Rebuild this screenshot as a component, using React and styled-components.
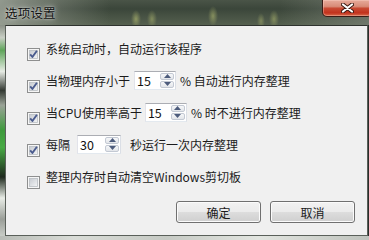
import React from "react";
import styled, { createGlobalStyle } from "styled-components";

const GlobalStyle = createGlobalStyle`
  html, body {
    margin: 0;
    padding: 0;
    width: 369px;
    height: 240px;
    overflow: hidden;
    background: #4f5a4c;
  }
  * { box-sizing: border-box; }
`;

const Window = styled.div`
  width: 369px;
  height: 240px;
  display: flex;
  flex-direction: column;
  overflow: hidden;
  font-family: "Noto Sans CJK SC", "Microsoft YaHei", sans-serif;
  background: #566052;
`;

const TitleBar = styled.div`
  height: 25px;
  flex: none;
  display: flex;
  align-items: center;
  padding-left: 5px;
  background:
    radial-gradient(ellipse 5px 9px at 136px 19px, rgba(196, 204, 120, 0.55), transparent),
    radial-gradient(ellipse 5px 9px at 152px 19px, rgba(196, 204, 120, 0.45), transparent),
    radial-gradient(ellipse 5px 10px at 213px 16px, rgba(196, 204, 120, 0.5), transparent),
    radial-gradient(ellipse 4px 8px at 261px 21px, rgba(196, 204, 120, 0.4), transparent),
    radial-gradient(ellipse 5px 9px at 274px 19px, rgba(196, 204, 120, 0.45), transparent),
    linear-gradient(to right, rgba(170, 176, 166, 0.75) 0, rgba(150, 156, 146, 0.35) 60px, transparent 110px, transparent 280px, rgba(140, 146, 136, 0.5) 369px),
    linear-gradient(to bottom, #4a5447 0%, #3b463a 35%, #55604f 100%);
`;

const Title = styled.span`
  font-size: 12.5px;
  color: #111;
  text-shadow: 0 0 6px rgba(255, 255, 255, 0.7), 0 0 2px rgba(255, 255, 255, 0.6);
  letter-spacing: 0.2px;
`;

const CloseButton = styled.div`
  margin-left: auto;
  margin-right: -3px;
  align-self: flex-start;
  width: 50px;
  height: 17px;
  border: 1px solid #3a1c16;
  border-top: none;
  border-radius: 0 0 5px 5px;
  background: linear-gradient(
    to bottom,
    #e7ab9b 0%,
    #d88c78 40%,
    #c84a33 52%,
    #c2321d 80%,
    #d76a4b 100%
  );
  box-shadow: inset 0 0 0 1px rgba(255, 220, 210, 0.35);
  display: flex;
  align-items: center;
  justify-content: center;
`;

const Body = styled.div`
  flex: 1;
  display: flex;
  min-height: 0;
`;

const LeftEdge = styled.div`
  width: 5px;
  flex: none;
  background: linear-gradient(
    to bottom,
    #8a9086 0%,
    #c8cec4 6%,
    #5fa55a 12%,
    #e6ebe4 22%,
    #343a33 31%,
    #9aa397 38%,
    #3e9a3c 50%,
    #48aa44 58%,
    #1e2a1e 72%,
    #e8ece6 82%,
    #9a9e98 92%,
    #c8ccc6 100%
  );
`;

const RightEdge = styled.div`
  width: 1px;
  flex: none;
  background: #2a2e2a;
`;

const Client = styled.div`
  width: 363px;
  flex: none;
  display: flex;
  flex-direction: column;
  padding-top: 6px;
  background: #f0f0f0;
  border: 1px solid #5a605a;
  border-top-color: #2e322e;
`;

const Row = styled.div`
  height: 32px;
  display: flex;
  align-items: center;
  padding-left: 21px;
`;

const Label = styled.span`
  font-size: 12px;
  color: #1b1b1b;
  white-space: nowrap;
  margin-left: ${(p) => p.$ml || 0}px;
`;

const CheckBox = styled.span`
  width: 13px;
  height: 13px;
  flex: none;
  margin-right: 6px;
  display: block;
`;

const SpinBox = styled.div`
  width: ${(p) => p.$w}px;
  height: 19px;
  margin-left: ${(p) => p.$ml}px;
  margin-right: ${(p) => p.$mr}px;
  display: flex;
  align-items: stretch;
  background: #fff;
  border: 1px solid;
  border-color: #abadb3 #dbdfe6 #e3e9ef #e2e3ea;
`;

const SpinValue = styled.span`
  flex: 1;
  font-size: 12.5px;
  color: #111;
  padding-left: 2px;
  display: flex;
  align-items: center;
`;

const SpinButtons = styled.div`
  width: 15px;
  display: flex;
  flex-direction: column;
  gap: 1px;
  padding: 1px 1px 1px 0;
`;

const SpinButton = styled.div`
  flex: 1;
  border: 1px solid #c3c9d3;
  border-radius: 2px;
  background: linear-gradient(to bottom, #f6f7f9, #e3e6ea);
  display: flex;
  align-items: center;
  justify-content: center;
`;

const Footer = styled.div`
  margin-top: auto;
  display: flex;
  justify-content: flex-end;
  gap: 9px;
  padding: 0 12px 12px 0;
`;

const Button = styled.div`
  width: 85px;
  height: 22px;
  border: 1px solid #707070;
  border-radius: 3px;
  background: linear-gradient(
    to bottom,
    #f2f2f2 0%,
    #ebebeb 50%,
    #dddddd 51%,
    #cfcfcf 100%
  );
  box-shadow: inset 0 0 0 1px #fbfbfb;
  display: flex;
  align-items: center;
  justify-content: center;
  font-size: 12px;
  color: #1b1b1b;
`;

const BottomEdge = styled.div`
  height: 4px;
  flex: none;
  background: linear-gradient(
    to right,
    #b8bcb6 0%,
    #d9dcd7 20%,
    #c6cac4 45%,
    #e2e5e0 70%,
    #bfc3bd 100%
  );
`;

function Check({ checked }) {
  return (
    <CheckBox>
      <svg width="13" height="13" viewBox="0 0 13 13">
        <defs>
          <linearGradient id={checked ? "cbOn" : "cbOff"} x1="0" y1="0" x2="1" y2="1">
            <stop offset="0" stopColor="#c6cad0" />
            <stop offset="1" stopColor="#f4f5f6" />
          </linearGradient>
        </defs>
        <rect x="0.5" y="0.5" width="12" height="12" fill="#f6f6f6" stroke="#8e8f8f" />
        <rect x="2.5" y="2.5" width="8" height="8" fill={`url(#${checked ? "cbOn" : "cbOff"})`} stroke="#b9bdc3" strokeWidth="0.8" />
        {checked && (
          <path d="M3.2 6.4 L5.4 9 L9.9 2.8" fill="none" stroke="#4a5b8e" strokeWidth="1.9" strokeLinejoin="round" />
        )}
      </svg>
    </CheckBox>
  );
}

function Arrow({ up }) {
  return (
    <svg width="7" height="4" viewBox="0 0 7 4">
      <path d={up ? "M0 4 L3.5 0 L7 4 Z" : "M0 0 L3.5 4 L7 0 Z"} fill="#4d5c7c" />
    </svg>
  );
}

function Spin({ value, w, ml, mr }) {
  return (
    <SpinBox $w={w} $ml={ml} $mr={mr}>
      <SpinValue>{value}</SpinValue>
      <SpinButtons>
        <SpinButton>
          <Arrow up />
        </SpinButton>
        <SpinButton>
          <Arrow />
        </SpinButton>
      </SpinButtons>
    </SpinBox>
  );
}

export default function App() {
  return (
    <>
      <GlobalStyle />
      <Window>
        <TitleBar>
          <Title>选项设置</Title>
          <CloseButton>
            <svg width="13" height="10" viewBox="0 0 13 10">
              <path
                d="M2 1.5 L11 8.5 M11 1.5 L2 8.5"
                stroke="#3a1810"
                strokeWidth="4"
                strokeLinecap="round"
              />
              <path
                d="M2 1.5 L11 8.5 M11 1.5 L2 8.5"
                stroke="#ffffff"
                strokeWidth="2.2"
                strokeLinecap="round"
              />
            </svg>
          </CloseButton>
        </TitleBar>
        <Body>
          <LeftEdge />
          <Client>
            <Row>
              <Check checked />
              <Label>系统启动时，自动运行该程序</Label>
            </Row>
            <Row>
              <Check checked />
              <Label>当物理内存小于</Label>
              <Spin value="15" w={42} ml={4} mr={4} />
              <Label>% 自动进行内存整理</Label>
            </Row>
            <Row>
              <Check checked />
              <Label>当CPU使用率高于</Label>
              <Spin value="15" w={42} ml={3} mr={4} />
              <Label>% 时不进行内存整理</Label>
            </Row>
            <Row>
              <Check checked />
              <Label>每隔</Label>
              <Spin value="30" w={44} ml={7} mr={9} />
              <Label>秒运行一次内存整理</Label>
            </Row>
            <Row>
              <Check />
              <Label>整理内存时自动清空Windows剪切板</Label>
            </Row>
            <Footer>
              <Button>确定</Button>
              <Button>取消</Button>
            </Footer>
          </Client>
          <RightEdge />
        </Body>
        <BottomEdge />
      </Window>
    </>
  );
}
